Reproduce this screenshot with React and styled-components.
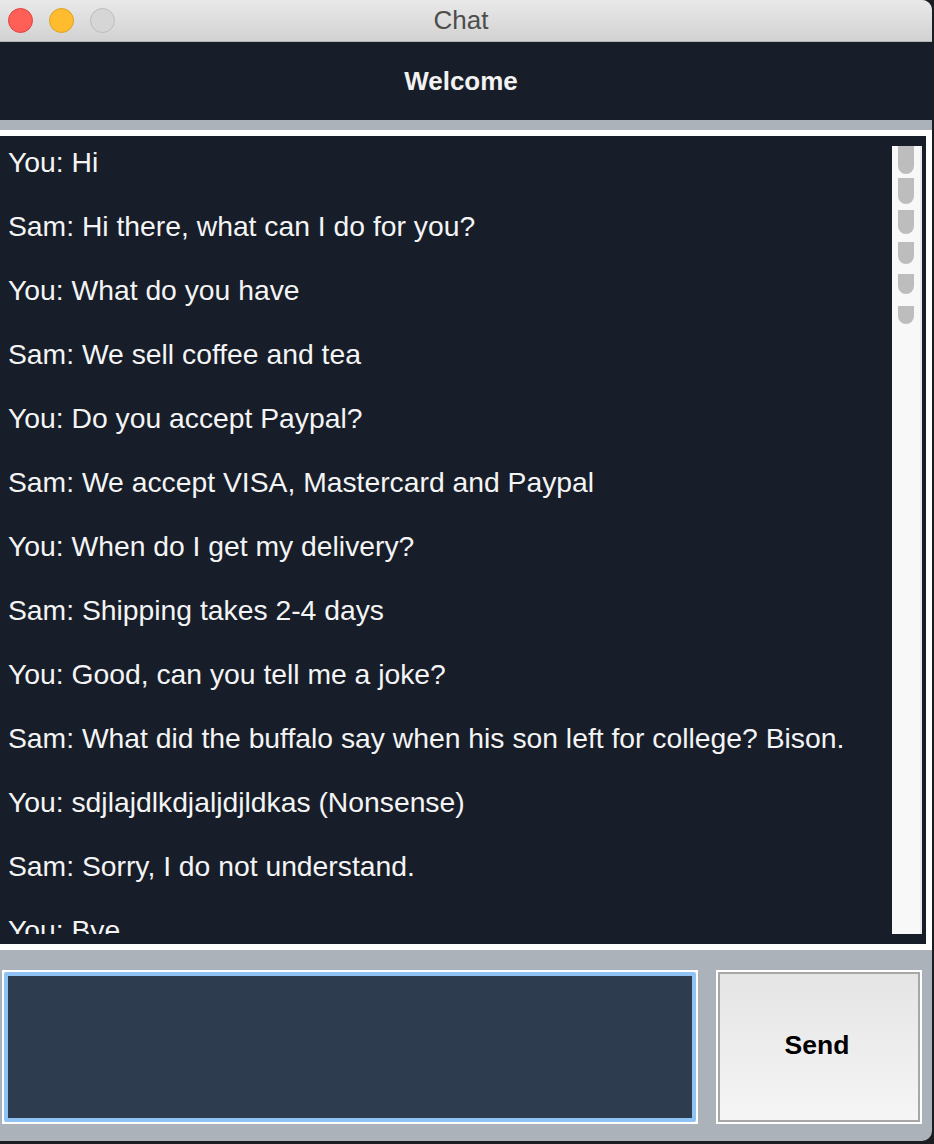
import React from 'react';
import styled, { createGlobalStyle } from 'styled-components';

const Global = createGlobalStyle`
    html, body {
        margin: 0;
        padding: 0;
        background: #1c1d20;
        overflow: hidden;
    }
    body {
        font-family: "Liberation Sans", Arial, sans-serif;
    }
`

const Window = styled.div`
    width: 942px;
    height: 1141px;
    margin-left: -10px;
    display: flex;
    flex-direction: column;
    background: #abb2b9;
    border-radius: 10px;
    overflow: hidden;
`

const TitleBar = styled.div`
    position: relative;
    height: 41px;
    flex-shrink: 0;
    display: flex;
    align-items: center;
    justify-content: center;
    background: linear-gradient(#e9e9e9, #d2d2d2);
    border-bottom: 1px solid #b4b4b4;
    color: #4d4d4d;
    font-size: 26px;
`

const Lights = styled.div`
    position: absolute;
    left: 18px;
    top: 8px;
    display: flex;
    gap: 16px;
`

const Light = styled.span`
    width: 23px;
    height: 23px;
    border-radius: 50%;
    background: ${p => p.color};
    border: 1px solid ${p => p.edge};
`

const Header = styled.div`
    height: 78px;
    flex-shrink: 0;
    display: flex;
    align-items: center;
    justify-content: center;
    background: #181e29;
    color: #f2f2f2;
    font-weight: bold;
    font-size: 26px;
    margin-bottom: 10px;
`

const Frame = styled.div`
    background: #ffffff;
    padding: 6px;
    display: flex;
    flex-shrink: 0;
    height: 808px;
`

const ChatBox = styled.div`
    flex: 1;
    display: flex;
    background: #171e2a;
    padding: 10px 4px 10px 12px;
`

const Messages = styled.div`
    flex: 1;
    overflow: hidden;
    color: #f4f4f4;
    font-size: 28.3px;
    line-height: 32px;

    p {
        margin: 0 0 32px 0;
        white-space: nowrap;
    }
`

const ScrollTrack = styled.div`
    width: 30px;
    background: #f8f8f8;
    border-right: 2px solid #e9e9e9;
    box-sizing: border-box;
    display: flex;
    flex-direction: column;
    align-items: center;
    overflow: hidden;
`

const ThumbPiece = styled.div`
    width: 16px;
    height: ${p => p.h}px;
    margin-bottom: ${p => 32 - p.h}px;
    background: #bdbdbd;
    border-radius: 0 0 8px 8px;
    flex-shrink: 0;
`

const Bottom = styled.div`
    flex: 1;
    display: flex;
    align-items: flex-start;
    gap: 18px;
    padding: 20px 10px 0 12px;
`

const InputOuter = styled.div`
    flex: 1;
    height: 154px;
    background: #ffffff;
    padding: 2px;
    box-sizing: border-box;
`

const Input = styled.textarea`
    width: 100%;
    height: 100%;
    box-sizing: border-box;
    background: #2d3c4f;
    border: 4px solid #8ec3f4;
    border-radius: 2px;
    outline: none;
    resize: none;
    color: #ffffff;
    font-family: "Liberation Sans", Arial, sans-serif;
    font-size: 24px;
    display: block;
`

const SendButton = styled.button`
    width: 206px;
    height: 154px;
    padding: 0 4px 4px 0;
    box-sizing: border-box;
    border: 2px solid #ffffff;
    box-shadow: inset 0 0 0 2px #a7a7a7;
    background: linear-gradient(#e5e5e5, #f5f5f5);
    color: #000000;
    font-family: "Liberation Sans", Arial, sans-serif;
    font-weight: bold;
    font-size: 26.5px;
`

const messages = [
    'You: Hi',
    'Sam: Hi there, what can I do for you?',
    'You: What do you have',
    'Sam: We sell coffee and tea',
    'You: Do you accept Paypal?',
    'Sam: We accept VISA, Mastercard and Paypal',
    'You: When do I get my delivery?',
    'Sam: Shipping takes 2-4 days',
    'You: Good, can you tell me a joke?',
    'Sam: What did the buffalo say when his son left for college? Bison.',
    'You: sdjlajdlkdjaljdjldkas (Nonsense)',
    'Sam: Sorry, I do not understand.',
    'You: Bye',
    'Sam: See you later, thanks for visiting',
]

const pieces = [28, 26, 24, 22, 20, 18]

const App = () => {
    return (
        <>
            <Global />
            <Window>
                <TitleBar>
                    <Lights>
                        <Light color="#fe5f57" edge="#e0443e" />
                        <Light color="#febc2e" edge="#dea123" />
                        <Light color="#d6d6d6" edge="#bdbdbd" />
                    </Lights>
                    Chat
                </TitleBar>
                <Header>Welcome</Header>
                <Frame>
                    <ChatBox>
                        <Messages>
                            {messages.map((m, i) => <p key={i}>{m}</p>)}
                        </Messages>
                        <ScrollTrack>
                            {pieces.map((h, i) => <ThumbPiece key={i} h={h} />)}
                        </ScrollTrack>
                    </ChatBox>
                </Frame>
                <Bottom>
                    <InputOuter>
                        <Input />
                    </InputOuter>
                    <SendButton>Send</SendButton>
                </Bottom>
            </Window>
        </>
    );
};

export default App;
